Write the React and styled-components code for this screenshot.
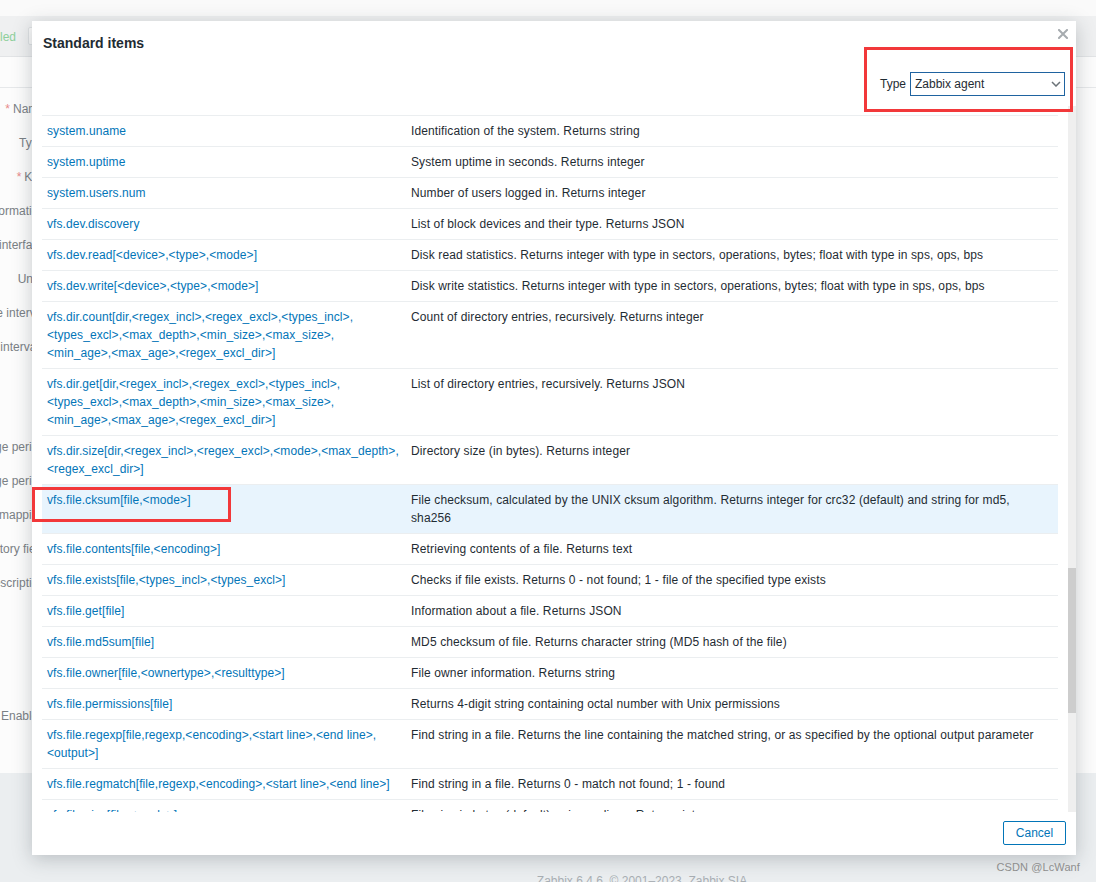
import React from 'react'
import styled, { createGlobalStyle } from 'styled-components'

const GlobalStyle = createGlobalStyle`
  html, body {
    margin: 0;
    padding: 0;
  }
  body {
    font-family: "Liberation Sans", Arial, sans-serif;
    font-size: 12px;
    color: #1f2c33;
    background: #ebeef0;
    overflow: hidden;
  }
`

const Page = styled.div`
  position: relative;
  width: 1096px;
  height: 882px;
  overflow: hidden;
  display: flex;
  flex-direction: column;
`

const TopStrip = styled.div`
  flex-shrink: 0;
  height: 16px;
  background: #fafafa;
`

const TabBar = styled.div`
  flex-shrink: 0;
  height: 40px;
  display: flex;
  align-items: center;
  gap: 12px;
  background: #eff0f1;
  border-bottom: 1px solid #e2e4e6;
`

const TabText = styled.span`
  color: #8dcf9b;
  font-size: 12px;
  margin-top: 2px;
`

const TabBox = styled.span`
  width: 40px;
  height: 16px;
  background: #fafafa;
  border: 1px solid #dfe2e4;
  border-radius: 2px;
`

const FormArea = styled.div`
  flex-shrink: 0;
  height: 716px;
  background: #fcfcfc;
`

const FormHead = styled.div`
  height: 30px;
  border-bottom: 1px solid #e6e8ea;
  margin-bottom: 4px;
`

const FormRow = styled.div`
  height: ${p => p.$h || 34}px;
  display: flex;
`

const LabelCell = styled.div`
  width: 45px;
  display: flex;
  justify-content: flex-end;
  white-space: nowrap;
  line-height: 34px;
  color: #7a8085;
`

const Req = styled.span`
  color: #e88a8a;
  margin-right: 3px;
`

const PageFooter = styled.div`
  flex: 1;
  min-height: 0;
  overflow: hidden;
  padding: 101px 0 0 188px;
  text-align: center;
  color: #a9afb4;
  line-height: 14px;
`

const Modal = styled.div`
  position: absolute;
  left: 32px;
  top: 21px;
  width: 1044px;
  height: 834px;
  background: #fff;
  box-shadow: 0 4px 18px rgba(40, 50, 60, 0.25);
  display: flex;
  flex-direction: column;
`

const Header = styled.div`
  position: relative;
  height: 85px;
  box-sizing: border-box;
  padding: 13px 11px 10px 11px;
`

const Title = styled.h4`
  margin: 0;
  font-size: 14px;
  font-weight: bold;
  line-height: 18px;
  color: #1f2c33;
`

const CloseBtn = styled.button`
  position: absolute;
  top: 8px;
  right: 8px;
  width: 10px;
  height: 10px;
  padding: 0;
  border: 0;
  background: none;
  display: flex;
`

const Filter = styled.div`
  margin-top: 20px;
  display: flex;
  justify-content: flex-end;
  align-items: center;
  gap: 4px;
`

const FilterLabel = styled.span`
  color: #1f2c33;
`

const Select = styled.div`
  width: 155px;
  height: 24px;
  box-sizing: border-box;
  border: 1px solid #1f63a0;
  display: flex;
  align-items: center;
  justify-content: space-between;
  padding: 0 3px 0 4px;
  color: #1f2c33;
  background: #fff;
`

const Body = styled.div`
  height: 706px;
  flex-shrink: 0;
  display: flex;
`

const Content = styled.div`
  flex: 1;
  overflow: hidden;
  padding: 9px 10px 0 10px;
`

const Track = styled.div`
  width: 8px;
  background: #efefef;
`

const Thumb = styled.div`
  margin-top: ${p => p.$top}px;
  height: ${p => p.$size}px;
  background: #cdcdcd;
`

const Table = styled.table`
  width: 100%;
  border-collapse: collapse;
  table-layout: fixed;
`

const Row = styled.tr`
  border-top: 1px solid #ebeef0;
  background: ${p => (p.$active ? '#e8f4fd' : 'transparent')};
`

const KeyCell = styled.td`
  width: 354px;
  padding: 6px 5px;
  line-height: 18px;
  vertical-align: top;
  white-space: nowrap;
  letter-spacing: 0.08px;
`

const DescCell = styled.td`
  padding: 6px 5px;
  line-height: 18px;
  vertical-align: top;
  white-space: nowrap;
  letter-spacing: 0.12px;
  color: #1f2c33;
`

const Link = styled.a`
  color: #0275b8;
  text-decoration: none;
`

const Footer = styled.div`
  flex: 1;
  display: flex;
  justify-content: flex-end;
  align-items: flex-start;
  padding: 9px 10px 0 0;
`

const Button = styled.button`
  width: 63px;
  height: 24px;
  border: 1px solid #0275b8;
  border-radius: 2px;
  background: #fff;
  color: #0275b8;
  font-family: inherit;
  font-size: 12px;
  padding: 0;
`

const Annot = styled.div`
  position: absolute;
  left: ${p => p.$x}px;
  top: ${p => p.$y}px;
  width: ${p => p.$w}px;
  height: ${p => p.$h}px;
  box-sizing: border-box;
  border: 3px solid #f2383a;
`

const Watermark = styled.div`
  position: absolute;
  right: 16px;
  top: 861px;
  font-size: 11px;
  color: #8e8e8e;
  letter-spacing: 0.1px;
`

const formLabels = [
  { t: 'Name', req: true },
  { t: 'Type' },
  { t: 'Key', req: true },
  { t: 'Type of information' },
  { t: 'Host interface' },
  { t: 'Units' },
  { t: 'Update interval' },
  { t: 'Custom intervals', h: 100 },
  { t: 'History storage period' },
  { t: 'Trend storage period' },
  { t: 'Value mapping' },
  { t: 'Populates host inventory field' },
  { t: 'Description', h: 133 },
  { t: 'Enabled' }
]

const items = [
  { k: ['system.uname'], d: ['Identification of the system. Returns string'] },
  { k: ['system.uptime'], d: ['System uptime in seconds. Returns integer'] },
  { k: ['system.users.num'], d: ['Number of users logged in. Returns integer'] },
  { k: ['vfs.dev.discovery'], d: ['List of block devices and their type. Returns JSON'] },
  {
    k: ['vfs.dev.read[<device>,<type>,<mode>]'],
    d: ['Disk read statistics. Returns integer with type in sectors, operations, bytes; float with type in sps, ops, bps']
  },
  {
    k: ['vfs.dev.write[<device>,<type>,<mode>]'],
    d: ['Disk write statistics. Returns integer with type in sectors, operations, bytes; float with type in sps, ops, bps']
  },
  {
    k: [
      'vfs.dir.count[dir,<regex_incl>,<regex_excl>,<types_incl>,',
      '<types_excl>,<max_depth>,<min_size>,<max_size>,',
      '<min_age>,<max_age>,<regex_excl_dir>]'
    ],
    d: ['Count of directory entries, recursively. Returns integer']
  },
  {
    k: [
      'vfs.dir.get[dir,<regex_incl>,<regex_excl>,<types_incl>,',
      '<types_excl>,<max_depth>,<min_size>,<max_size>,',
      '<min_age>,<max_age>,<regex_excl_dir>]'
    ],
    d: ['List of directory entries, recursively. Returns JSON']
  },
  {
    k: ['vfs.dir.size[dir,<regex_incl>,<regex_excl>,<mode>,<max_depth>,', '<regex_excl_dir>]'],
    d: ['Directory size (in bytes). Returns integer']
  },
  {
    k: ['vfs.file.cksum[file,<mode>]'],
    d: ['File checksum, calculated by the UNIX cksum algorithm. Returns integer for crc32 (default) and string for md5,', 'sha256'],
    active: true
  },
  { k: ['vfs.file.contents[file,<encoding>]'], d: ['Retrieving contents of a file. Returns text'] },
  {
    k: ['vfs.file.exists[file,<types_incl>,<types_excl>]'],
    d: ['Checks if file exists. Returns 0 - not found; 1 - file of the specified type exists']
  },
  { k: ['vfs.file.get[file]'], d: ['Information about a file. Returns JSON'] },
  { k: ['vfs.file.md5sum[file]'], d: ['MD5 checksum of file. Returns character string (MD5 hash of the file)'] },
  { k: ['vfs.file.owner[file,<ownertype>,<resulttype>]'], d: ['File owner information. Returns string'] },
  { k: ['vfs.file.permissions[file]'], d: ['Returns 4-digit string containing octal number with Unix permissions'] },
  {
    k: ['vfs.file.regexp[file,regexp,<encoding>,<start line>,<end line>,', '<output>]'],
    d: ['Find string in a file. Returns the line containing the matched string, or as specified by the optional output parameter']
  },
  {
    k: ['vfs.file.regmatch[file,regexp,<encoding>,<start line>,<end line>]'],
    d: ['Find string in a file. Returns 0 - match not found; 1 - found']
  },
  { k: ['vfs.file.size[file,<mode>]'], d: ['File size in bytes (default) or in newlines. Returns integer'] },
  { k: ['vfs.file.time[file,<mode>]'], d: ['File time information. Returns integer'] }
]

const Lines = ({ lines }) =>
  lines.map((l, i) => (
    <React.Fragment key={i}>
      {i > 0 && <br />}
      {l}
    </React.Fragment>
  ))

const CloseIcon = () => (
  <svg width="10" height="10" viewBox="0 0 10 10">
    <path d="M1 1 L9 9 M9 1 L1 9" stroke="#a6abaf" strokeWidth="2" strokeLinecap="square" />
  </svg>
)

const Chevron = () => (
  <svg width="10" height="6" viewBox="0 0 10 6">
    <polyline points="1,1 5,5 9,1" fill="none" stroke="#6b7378" strokeWidth="1.5" />
  </svg>
)

export default function App() {
  return (
    <>
      <GlobalStyle />
      <Page>
        <TopStrip />
        <TabBar>
          <TabText>led</TabText>
          <TabBox />
        </TabBar>
        <FormArea>
          <FormHead />
          {formLabels.map(f => (
            <FormRow key={f.t} $h={f.h}>
              <LabelCell>
                {f.req && <Req>*</Req>}
                {f.t}
              </LabelCell>
            </FormRow>
          ))}
        </FormArea>
        <PageFooter>Zabbix 6.4.6. © 2001–2023, Zabbix SIA</PageFooter>

        <Modal>
          <Header>
            <Title>Standard items</Title>
            <CloseBtn title="Close">
              <CloseIcon />
            </CloseBtn>
            <Filter>
              <FilterLabel>Type</FilterLabel>
              <Select>
                <span>Zabbix agent</span>
                <Chevron />
              </Select>
            </Filter>
          </Header>
          <Body>
            <Content>
              <Table>
                <tbody>
                  {items.map(it => (
                    <Row key={it.k[0]} $active={it.active}>
                      <KeyCell>
                        <Link>
                          <Lines lines={it.k} />
                        </Link>
                      </KeyCell>
                      <DescCell>
                        <Lines lines={it.d} />
                      </DescCell>
                    </Row>
                  ))}
                </tbody>
              </Table>
            </Content>
            <Track>
              <Thumb $top={462} $size={145} />
            </Track>
          </Body>
          <Footer>
            <Button>Cancel</Button>
          </Footer>
        </Modal>

        <Annot $x={864} $y={47} $w={209} $h={65} />
        <Annot $x={32} $y={487} $w={199} $h={35} />
        <Watermark>CSDN @LcWanf</Watermark>
      </Page>
    </>
  )
}
